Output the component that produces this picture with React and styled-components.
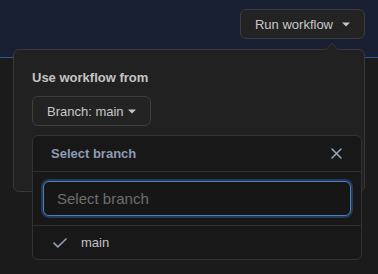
import React from 'react';
import styled, { createGlobalStyle } from 'styled-components';

const GlobalStyle = createGlobalStyle`
  html, body {
    margin: 0;
    padding: 0;
    background: #1b1b1b;
    font-family: "Liberation Sans", Arial, sans-serif;
    color: #c6c6c6;
  }
`;

const Caret = ({ color = '#c4c4c4' }) => (
  <svg width="8" height="5" viewBox="0 0 8 5">
    <path d="M0 0.5h8L4 4.5z" fill={color} />
  </svg>
);

const App = () => (
  <>
    <GlobalStyle />
    <Page>
      <TopBar>
        <RunWrap>
          <RunButton>
            <span>Run workflow</span>
            <Caret />
          </RunButton>
          <Popover>
            <Title>Use workflow from</Title>
            <BranchWrap>
              <BranchButton>
                <span>Branch: main</span>
                <Caret />
              </BranchButton>
              <Menu>
                <MenuHeader>
                  <span>Select branch</span>
                  <CloseButton aria-label="Close">
                    <svg width="11" height="11" viewBox="0 0 11 11">
                      <path d="M1 1l9 9M10 1L1 10" stroke="#9aa5ba" strokeWidth="1.5" strokeLinecap="round" />
                    </svg>
                  </CloseButton>
                </MenuHeader>
                <FilterRow>
                  <FilterInput placeholder="Select branch" autoFocus />
                </FilterRow>
                <Item>
                  <svg width="14" height="10" viewBox="0 0 14 10">
                    <path d="M1 5.2l3.8 3.6L13 1" fill="none" stroke="#8d9bb6" strokeWidth="1.7" strokeLinecap="round" strokeLinejoin="round" />
                  </svg>
                  <span>main</span>
                </Item>
              </Menu>
            </BranchWrap>
          </Popover>
        </RunWrap>
      </TopBar>
    </Page>
  </>
);

const Page = styled.div`
  height: 274px;
  background: #1b1b1b;
`;

const TopBar = styled.header`
  height: 58px;
  box-sizing: border-box;
  background: #1a2033;
  border-bottom: 1px solid #2c5a92;
  display: flex;
  justify-content: flex-end;
  padding: 9px 13px 0 0;
`;

const RunWrap = styled.div`
  position: relative;
  height: 30px;
`;

const RunButton = styled.button`
  height: 30px;
  box-sizing: border-box;
  display: flex;
  align-items: center;
  gap: 9px;
  padding: 0 14px 0 14px;
  background: #232323;
  border: 1px solid #3c3c3c;
  border-radius: 6px;
  color: #c8c8c8;
  font-family: inherit;
  font-size: 13px;
`;

const Popover = styled.div`
  position: absolute;
  top: 40px;
  right: 0;
  width: 352px;
  height: 143px;
  box-sizing: border-box;
  padding: 18px 18px;
  background: #212121;
  border: 1px solid #383838;
  border-radius: 6px;

  &::before, &::after {
    content: '';
    position: absolute;
    right: 25px;
    border: 7px solid transparent;
    border-top: 0;
  }

  &::before {
    top: -7px;
    border-bottom-color: #383838;
  }

  &::after {
    top: -6px;
    border-bottom-color: #212121;
  }
`;

const Title = styled.div`
  font-size: 13px;
  font-weight: bold;
  line-height: 20px;
  color: #c4c4c4;
  margin-bottom: 8px;
`;

const BranchWrap = styled.div`
  position: relative;
`;

const BranchButton = styled.button`
  height: 30px;
  box-sizing: border-box;
  display: flex;
  align-items: center;
  gap: 4px;
  padding: 0 14px;
  background: #232323;
  border: 1px solid #3e3e3e;
  border-radius: 6px;
  color: #c8c8c8;
  font-family: inherit;
  font-size: 13px;
`;

const Menu = styled.div`
  position: absolute;
  top: 39px;
  left: 0;
  width: 330px;
  box-sizing: border-box;
  background: #181818;
  border: 1px solid #323232;
  border-radius: 6px;
  overflow: hidden;
`;

const MenuHeader = styled.div`
  height: 36px;
  box-sizing: border-box;
  display: flex;
  align-items: center;
  justify-content: space-between;
  padding: 0 18px;
  border-bottom: 1px solid #2f2f2f;
  font-size: 13px;
  font-weight: bold;
  color: #8d9bb6;
`;

const CloseButton = styled.button`
  width: 24px;
  height: 24px;
  display: flex;
  align-items: center;
  justify-content: center;
  padding: 0;
  margin-right: -5px;
  background: none;
  border: 0;
`;

const FilterRow = styled.div`
  padding: 9px 10px;
  border-bottom: 1px solid #2f2f2f;
`;

const FilterInput = styled.input`
  display: block;
  width: 100%;
  height: 35px;
  box-sizing: border-box;
  padding: 0 13px;
  background: #161616;
  border: 1px solid #4a7fbd;
  border-radius: 6px;
  box-shadow: 0 0 0 2px #223a58;
  outline: none;
  color: #c8c8c8;
  caret-color: #c8c8c8;
  font-family: inherit;
  font-size: 15px;

  &::placeholder {
    color: #6e6e6e;
  }
`;

const Item = styled.div`
  height: 33px;
  display: flex;
  align-items: center;
  gap: 14px;
  padding-left: 20px;
  font-size: 13px;
  color: #c2c2c2;
`;

export default App;
